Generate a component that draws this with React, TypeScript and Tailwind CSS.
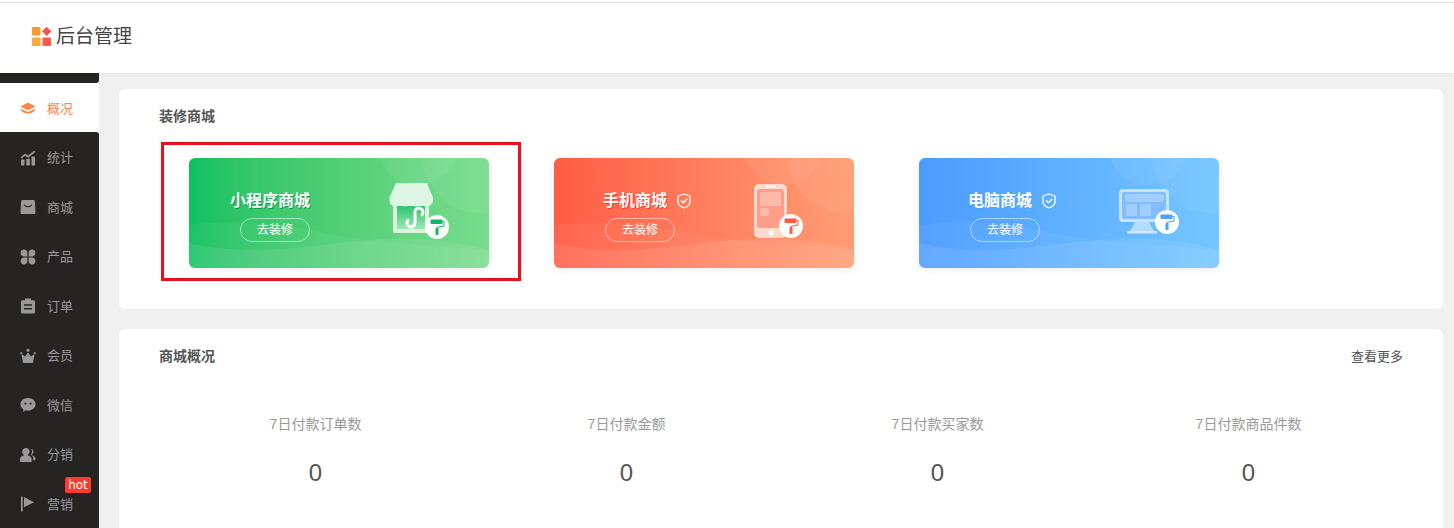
import type { ReactNode } from 'react'

const cjk = "font-['Liberation_Sans','Noto_Sans_CJK_SC',sans-serif]"

// sidebar icons, 16x16 filled
function NavIcon({ name }: { name: string }) {
  const fill = 'currentColor'
  return (
    <svg width="16" height="16" viewBox="0 0 16 16" fill={fill} className="shrink-0">
      {name === 'layers' && (
        <>
          <path d="M8 2.500 15.500 6.600 8 10.200.5 6.600Z" />
          <path d="M1.800 9.200 8 12.100l6.200-2.900 1.300.9c-.6 1-1.600 1.800-3 2.500-1.400.7-2.900 1.200-4.500 1.200s-3.100-.5-4.500-1.200C2.100 11.900 1.100 11.100.5 10.100Z" />
        </>
      )}
      {name === 'chart' && (
        <>
          <path d="M.5 7.500 5 3.500l3.200 2L14 .8l1.500 1-7.200 6-3.200-2-3.500 2.700Z" />
          <rect x="1" y="9.500" width="3.500" height="6" rx=".8" />
          <rect x="6.300" y="8.700" width="3.500" height="6.800" rx=".8" />
          <rect x="11.500" y="6.500" width="3.500" height="9" rx=".8" />
        </>
      )}
      {name === 'bag' && (
        <path
          fillRule="evenodd"
          d="M2.500 1h11c.8 0 1.300.5 1.400 1.200l.6 11.300c0 1-.7 1.500-1.500 1.500H2c-.8 0-1.500-.5-1.500-1.500l.6-11.300C1.200 1.500 1.700 1 2.500 1ZM4.600 5.400l-.9.7C4.800 7.600 6.300 8.300 8 8.300s3.200-.7 4.300-2.200l-.9-.7C10.500 6.500 9.300 7 8 7s-2.500-.5-3.400-1.600Z"
        />
      )}
      {name === 'clover' && (
        <>
          <path d="M4 .6c2 0 3.400 1.500 3.400 3.400v3.400H4C2 7.400.6 6 .6 4S2 .6 4 .6Z" />
          <path d="M12 .6c2 0 3.400 1.400 3.400 3.400S14 7.400 12 7.400H8.600V4C8.600 2.100 10 .6 12 .6Z" />
          <path d="M4 8.600h3.400V12c0 2-1.400 3.400-3.400 3.400S.6 14 .6 12 2 8.600 4 8.600Z" />
          <path d="M8.600 8.600H12c2 0 3.400 1.400 3.400 3.400S14 15.400 12 15.400 8.600 14 8.600 12Z" />
        </>
      )}
      {name === 'clip' && (
        <path
          fillRule="evenodd"
          d="M5 .5h6v1.700h2.300c1 0 1.700.7 1.700 1.700v10c0 1-.7 1.600-1.700 1.600H2.700c-1 0-1.700-.6-1.700-1.600v-10c0-1 .7-1.700 1.700-1.700H5ZM4 6.300v1.500h8V6.300Zm0 3.700v1.500h8V10Z"
        />
      )}
      {name === 'crown' && (
        <>
          <circle cx="8" cy="2.200" r="1.500" />
          <circle cx="1.200" cy="5" r="1.100" />
          <circle cx="14.800" cy="5" r="1.100" />
          <path d="M1.500 6 5 8.500 8 4.500l3 4L14.500 6l-1.300 8c-.1.600-.5 1-1.200 1H4c-.7 0-1.100-.4-1.200-1Z" />
        </>
      )}
      {name === 'chat' && (
        <path
          fillRule="evenodd"
          d="M8 1c4.200 0 7.600 2.800 7.600 6.300S12.200 13.600 8 13.600c-.9 0-1.700-.1-2.500-.3L3.200 15l.2-2.800C1.500 11 .4 9.300.4 7.300.4 3.800 3.800 1 8 1ZM5.400 5.400a1.100 1.100 0 1 0 0 2.200 1.100 1.100 0 0 0 0-2.200Zm5.200 0a1.100 1.100 0 1 0 0 2.200 1.100 1.100 0 0 0 0-2.200Z"
        />
      )}
      {name === 'users' && (
        <>
          <path d="M6.200 1c2 0 3.400 1.600 3.400 3.600 0 1.400-.7 2.600-1.700 3.200v.8c2.200.5 3.800 1.900 3.800 3.700v1.700c0 .6-.4 1-1 1H1c-.6 0-1-.4-1-1v-1.700c0-1.800 1.600-3.200 3.800-3.700v-.8c-1-.6-1.700-1.800-1.700-3.200C2.100 2.600 4.200 1 6.200 1Z" />
          <path d="M11 1.800c1.500.3 2.500 1.500 2.500 3 0 1.100-.6 2-1.400 2.600v1c2 .6 3.400 1.700 3.400 3.100v1c0 .5-.3.800-.8.800h-1.400v-1.800c0-1.500-.9-2.700-2.400-3.500.7-.9 1.100-2 1.100-3.200 0-1-.2-1.700-1-3Z" />
        </>
      )}
      {name === 'flag' && (
        <>
          <rect x="1" y="0.500" width="1.700" height="15" />
          <path d="M4 1 14 6.200 4 11.200Z" />
        </>
      )}
    </svg>
  )
}

const navItems = [
  ['chart', '统计'],
  ['bag', '商城'],
  ['clover', '产品'],
  ['clip', '订单'],
  ['crown', '会员'],
  ['chat', '微信'],
  ['users', '分销'],
  ['flag', '营销'],
]

function Sidebar() {
  return (
    <aside className="flex w-[99px] shrink-0 flex-col bg-white text-[13px]">
      <div className="h-[10px] rounded-br-[3px] bg-[#252423]" />
      <div className="flex h-[50px] items-center gap-[11px] pl-[20px] pt-[2px] text-[#ff8646]">
        <NavIcon name="layers" />
        <span>概况</span>
      </div>
      <div className="flex-1 rounded-tr-[3px] bg-[#252423] text-[#999999]">
        {navItems.map(([icon, label]) => (
          <div key={label} className="relative flex h-[49.5px] items-center gap-[11px] pl-[20px] pt-[2px]">
            <NavIcon name={icon} />
            <span>{label}</span>
            {label === '营销' && (
              <span className="absolute left-[65px] top-[-2px] flex h-[16px] w-[26px] items-center justify-center rounded-[2px] bg-[#ff3b30] font-['DejaVu_Sans',sans-serif] text-[12px] text-white">
                hot
              </span>
            )}
          </div>
        ))}
      </div>
    </aside>
  )
}

function Roller({ cx, cy, color }: { cx: number; cy: number; color: string }) {
  return (
    <g transform={`translate(${cx - 12} ${cy - 12})`}>
      <circle cx="12" cy="12" r="12" fill="#ffffff" fillOpacity=".96" />
      <rect x="5.500" y="4.500" width="12" height="4.500" rx="1" fill={color} />
      <path d="M17.500 6.500h1.500v4.500l-7 1.300v2" stroke={color} strokeWidth="1" fill="none" />
      <rect x="10.500" y="13" width="3" height="7" rx="1" fill={color} />
    </g>
  )
}

function StoreArt() {
  return (
    <svg width="70" height="64" viewBox="0 0 70 64">
      <defs>
        <linearGradient id="storeIn" x1="0" y1="0" x2="0" y2="1">
          <stop offset="0" stopColor="#2cc46e" />
          <stop offset="1" stopColor="#9fe8b4" />
        </linearGradient>
      </defs>
      <rect x="8" y="22" width="36" height="31" rx="1.500" fill="#d9f5e0" />
      <rect x="12" y="26" width="28" height="23" fill="url(#storeIn)" />
      <path
        d="M11 3h31l6 14.500v3c0 3.500-3.500 6-6.500 6s-4-1-5.500-3c-1.500 2-3.500 3-5 3s-4.500-1-5.500-3c-1.500 2-3.500 3-5.500 3s-3.500-1-5-3c-1.500 2-3 3-4.500 3-3 0-6-2.500-6-6v-3Z"
        fill="#def6e4"
      />
      <path
        d="M37 34.800A4 4 0 1 0 30 32V43A4 4 0 1 1 23 40.200"
        stroke="#ffffff"
        strokeWidth="3"
        strokeLinecap="round"
        fill="none"
      />
      <Roller cx={52} cy={47} color="#0fb765" />
    </svg>
  )
}

function PhoneArt() {
  return (
    <svg width="70" height="64" viewBox="0 0 70 64">
      <rect x="4" y="4" width="33" height="54" rx="5" fill="#ffd9cd" />
      <rect x="7" y="9" width="27" height="39" rx="3" fill="#ff9d8b" />
      <rect x="10" y="12" width="21" height="14" rx="2" fill="#ffb9a9" />
      <rect x="10" y="28" width="9" height="8" rx="2" fill="#ffb9a9" />
      <rect x="16" y="5.800" width="10" height="1.400" rx=".7" fill="#ffffff" />
      <circle cx="21" cy="53" r="2.500" fill="#ffffff" />
      <Roller cx={41} cy={46} color="#ff5a45" />
    </svg>
  )
}

function MonitorArt() {
  return (
    <svg width="70" height="64" viewBox="0 0 70 64">
      <path d="M20 42h14l5 9.500H15Z" fill="#b4dcff" />
      <rect x="12" y="51" width="30" height="2.500" rx="1" fill="#cfe8ff" />
      <rect x="4" y="9" width="50" height="33" rx="4" fill="#c6e3ff" />
      <rect x="7" y="12" width="44" height="27" rx="2" fill="#83bdff" />
      <rect x="10" y="14" width="39" height="8" rx="2" fill="#a2cdff" />
      <rect x="11" y="24" width="11" height="12" rx="1.500" fill="#a2cdff" />
      <rect x="25" y="24" width="11" height="12" rx="1.500" fill="#a2cdff" />
      <Roller cx={52} cy={42} color="#4e9fff" />
    </svg>
  )
}

function Shield() {
  return (
    <svg width="14" height="16" viewBox="0 0 14 16" fill="none" stroke="#ffffff" strokeWidth="1.300" className="shrink-0">
      <path d="M7 1 13 3v5.500c0 3-2.700 5.400-6 6.500-3.300-1.100-6-3.500-6-6.500V3Z" strokeLinejoin="round" />
      <path d="m4.300 7.800 2 2 3.500-3.500" strokeLinecap="round" strokeLinejoin="round" />
    </svg>
  )
}

function Decor() {
  return (
    <svg className="absolute inset-0" width="300" height="110" viewBox="0 0 300 110">
      <circle cx="229" cy="-14" r="41" fill="#ffffff" fillOpacity=".06" />
      <circle cx="292" cy="-5" r="60" fill="#ffffff" fillOpacity=".06" />
      <path d="M0 67C40 62 80 64 130 74 180 86 240 86 300 92V110H0Z" fill="#ffffff" fillOpacity=".05" />
      <path d="M0 85C50 96 90 92 150 85 200 78 250 78 300 92V110H0Z" fill="#ffffff" fillOpacity=".09" />
    </svg>
  )
}

function ShopCard({
  bg,
  shadow,
  title,
  titleOffset,
  verified,
  art,
}: {
  bg: string
  shadow: string
  title: string
  titleOffset: string
  verified?: boolean
  art: ReactNode
}) {
  return (
    <div className={`relative flex h-[110px] w-[300px] overflow-hidden rounded-[6px] pl-[51px] shadow-[0_2px_10px_rgba(0,0,0,0.07)] ${bg}`}>
      <Decor />
      <div className="relative flex w-[145px] shrink-0 flex-col items-start pt-[33px]">
        <div className={`flex h-[20px] items-center gap-[10px] ${titleOffset}`}>
          <span className={`text-[16px] font-bold leading-[20px] text-white ${shadow}`}>{title}</span>
          {verified && <Shield />}
        </div>
        <button className="mt-[7px] h-[24px] w-[70px] rounded-full border border-white/50 text-[12px] leading-[22px] text-white">
          去装修
        </button>
      </div>
      <div className="relative pt-[22px]">{art}</div>
    </div>
  )
}

const stats = ['7日付款订单数', '7日付款金额', '7日付款买家数', '7日付款商品件数']

export default function App() {
  return (
    <div className={`flex h-[528px] w-full flex-col overflow-hidden bg-[#f0f0f0] ${cjk}`}>
      <header className="relative z-10 h-[73px] shrink-0 bg-white shadow-[0_1px_4px_rgba(0,0,0,0.06)]">
        <div className="mt-[2px] h-[1px] bg-[#e6e6e6]" />
        <div className="flex h-[67px] items-center gap-[5px] pl-[32px]">
          <svg width="19" height="19" viewBox="0 0 19 19">
            <rect x="0" y="0" width="8.500" height="8.500" rx="1" fill="#ff9a2b" />
            <rect x="0" y="10.500" width="8.500" height="8.500" rx="1" fill="#ffa63c" />
            <rect x="10.500" y="10.500" width="8.500" height="8.500" rx="1" fill="#ff5a4a" />
            <path d="M14.700-.3 19.300 4.300 14.700 8.900 10.100 4.300Z" fill="#ff5046" />
          </svg>
          <span className="pt-[2px] text-[19px] text-[#444444]">后台管理</span>
        </div>
      </header>

      <div className="flex min-h-0 flex-1">
        <Sidebar />
        <main className="min-w-0 flex-1 pl-[20px] pr-[11px] pt-[16px]">
          <section className="relative h-[220px] rounded-[6px] bg-white px-[40px] pt-[18px]">
            <h2 className="text-[14px] font-bold leading-[19px] text-[#555555]">装修商城</h2>
            <div className="mt-[32px] flex gap-[65px] pl-[30px]">
              <ShopCard
                bg="bg-linear-to-r from-[#0ac160] to-[#78dc8d]"
                shadow="[text-shadow:1px_1px_0_#0f9c52]"
                title="小程序商城"
                titleOffset="-ml-[10px]"
                art={<StoreArt />}
              />
              <ShopCard
                bg="bg-linear-to-r from-[#ff5b45] to-[#ff9c74]"
                shadow="[text-shadow:1px_1px_0_#f03a32]"
                title="手机商城"
                titleOffset="-ml-[2px]"
                verified
                art={<PhoneArt />}
              />
              <ShopCard
                bg="bg-linear-to-r from-[#4a9bff] to-[#74c6ff]"
                shadow="[text-shadow:1px_1px_0_#4f9ff5]"
                title="电脑商城"
                titleOffset="-ml-[2px]"
                verified
                art={<MonitorArt />}
              />
            </div>
            {/* red annotation box */}
            <div className="absolute left-[42px] top-[53px] h-[139px] w-[360px] border-[3px] border-[#e8101c]" />
          </section>

          <section className="mt-[20px] h-[210px] rounded-[6px] bg-white px-[40px] pt-[18px]">
            <div className="flex items-center justify-between">
              <h2 className="text-[14px] font-bold leading-[19px] text-[#555555]">商城概况</h2>
              <a className="text-[13px] text-[#555555]">查看更多</a>
            </div>
            <div className="ml-[1px] mr-[-1px] mt-[47px] grid grid-cols-4 text-center">
              {stats.map((s) => (
                <div key={s}>
                  <div className="text-[14px] leading-[20px] text-[#999999]">{s}</div>
                  <div className="mt-[23px] text-[24px] leading-[32px] text-[#555555]">0</div>
                </div>
              ))}
            </div>
          </section>
        </main>
      </div>
    </div>
  )
}
